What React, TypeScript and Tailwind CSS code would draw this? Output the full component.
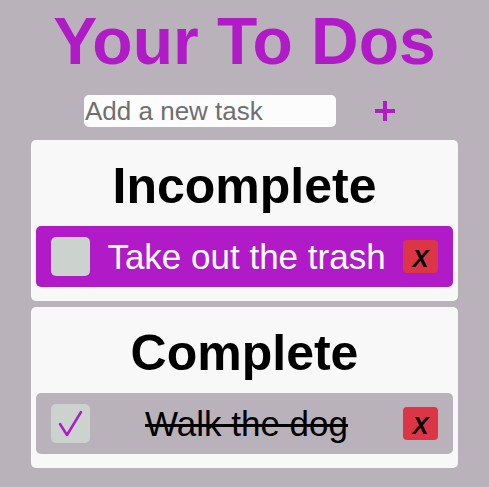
import { useState } from "react";

type Task = {
  id: number;
  text: string;
  done: boolean;
};

const CheckIcon = () => (
  <svg width="39" height="39" viewBox="0 0 39 39" fill="none">
    <polyline
      points="9,20 16,31 30,8"
      stroke="#b01bc7"
      strokeWidth="2.5"
      strokeLinecap="round"
      strokeLinejoin="round"
    />
  </svg>
);

const PlusIcon = () => (
  <svg width="20" height="20" viewBox="0 0 20 20">
    <rect x="8" y="0" width="4" height="20" fill="#b01bc7" />
    <rect x="0" y="8" width="20" height="4" fill="#b01bc7" />
  </svg>
);

const TaskRow = ({
  task,
  onToggle,
  onRemove,
}: {
  task: Task;
  onToggle: () => void;
  onRemove: () => void;
}) => (
  <div
    className={`flex items-center h-[61px] px-[15px] rounded-[5px] ${
      task.done ? "bg-[#b9b2ba]" : "bg-[#b01bc7]"
    }`}
  >
    <button
      onClick={onToggle}
      className="w-[39px] h-[39px] rounded-[5px] bg-[#ccd2ce] flex items-center justify-center shrink-0"
    >
      {task.done && <CheckIcon />}
    </button>
    <span
      className={`flex-1 text-center text-[35px] leading-none ${
        task.done
          ? "text-black line-through decoration-[3px]"
          : "text-white"
      }`}
    >
      {task.text}
    </span>
    <button
      onClick={onRemove}
      className="w-[35px] h-[33px] rounded-[4px] bg-[#dc3545] text-black italic font-bold text-[24px] leading-none flex items-center justify-center pt-[5px] shrink-0"
    >
      X
    </button>
  </div>
);

const TaskCard = ({
  title,
  tasks,
  onToggle,
  onRemove,
}: {
  title: string;
  tasks: Task[];
  onToggle: (id: number) => void;
  onRemove: (id: number) => void;
}) => (
  <div className="bg-[#f8f8f8] rounded-[5px] px-[5px] pt-[21px] pb-[14px]">
    <h2 className="text-center font-bold text-[50px] leading-[50px] text-black">
      {title}
    </h2>
    <div className="mt-[15px] flex flex-col gap-2">
      {tasks.map((task) => (
        <TaskRow
          key={task.id}
          task={task}
          onToggle={() => onToggle(task.id)}
          onRemove={() => onRemove(task.id)}
        />
      ))}
    </div>
  </div>
);

export default function App() {
  const [tasks, setTasks] = useState<Task[]>([
    { id: 1, text: "Take out the trash", done: false },
    { id: 2, text: "Walk the dog", done: true },
  ]);
  const [draft, setDraft] = useState("");

  const addTask = () => {
    if (!draft.trim()) return;
    setTasks((prev) => [...prev, { id: Date.now(), text: draft, done: false }]);
    setDraft("");
  };

  const toggle = (id: number) =>
    setTasks((prev) =>
      prev.map((t) => (t.id === id ? { ...t, done: !t.done } : t))
    );

  const remove = (id: number) =>
    setTasks((prev) => prev.filter((t) => t.id !== id));

  return (
    <div className="min-h-screen bg-[#b9b2ba] px-[31px] pt-[8px] font-['Liberation_Sans',Arial,sans-serif]">
      <h1 className="text-center font-bold text-[66px] leading-[66px] text-[#b01bc7]">
        Your To Dos
      </h1>

      <div className="flex items-center mt-[21px]">
        <input
          value={draft}
          onChange={(e) => setDraft(e.target.value)}
          placeholder="Add a new task"
          className="ml-[53px] w-[252px] h-[32px] rounded-[5px] bg-[#fcfcfc] px-[1px] text-[26px] leading-none text-black placeholder:text-[#6f6f6f] outline-none"
        />
        <button onClick={addTask} className="ml-[39px]">
          <PlusIcon />
        </button>
      </div>

      <div className="mt-[13px] flex flex-col gap-[6px]">
        <TaskCard
          title="Incomplete"
          tasks={tasks.filter((t) => !t.done)}
          onToggle={toggle}
          onRemove={remove}
        />
        <TaskCard
          title="Complete"
          tasks={tasks.filter((t) => t.done)}
          onToggle={toggle}
          onRemove={remove}
        />
      </div>
    </div>
  );
}
